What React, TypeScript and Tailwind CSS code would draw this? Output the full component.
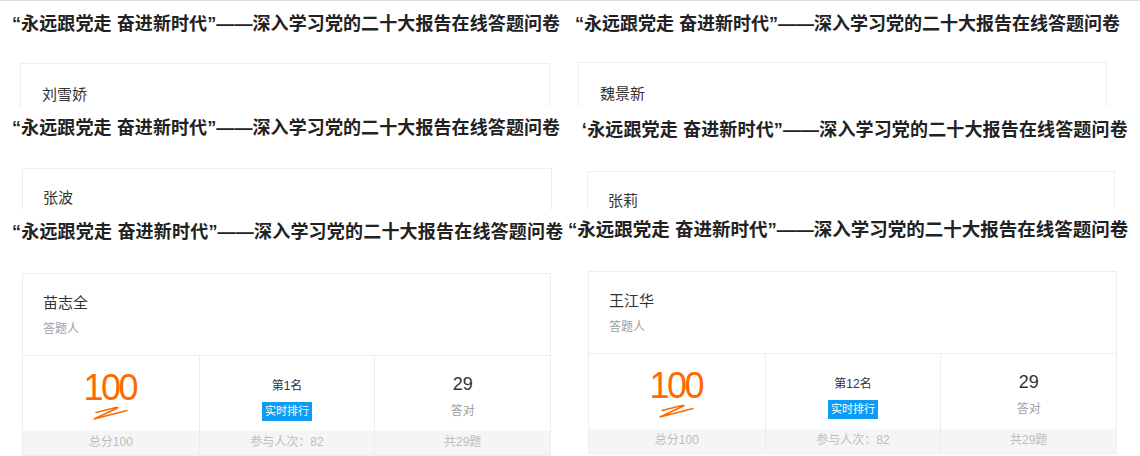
import React from "react";

const TITLE = "“永远跟党走 奋进新时代”——深入学习党的二十大报告在线答题问卷";
const FONT = { fontFamily: '"Liberation Sans", "Noto Sans CJK SC", sans-serif' };

function Title({ className = "" }: { className?: string }) {
  return (
    <div className={"h-[24px] leading-[24px] font-bold text-[#222] whitespace-nowrap " + className}>
      {TITLE}
    </div>
  );
}

function Squiggle() {
  return (
    <svg width="40" height="14" viewBox="0 0 40 14" className="block">
      <path d="M5 6.5 L25 1.5 L27 1.8 L4 12.5 L3 13 L36 4.5" fill="none" stroke="#ff6a00" strokeWidth="1.5" strokeLinecap="round" strokeLinejoin="round" />
    </svg>
  );
}

function FullCard({ name, rank }: { name: string; rank: string }) {
  return (
    <div className="w-[529px] border border-[#eeeeee] bg-white">
      <div className="pt-[18px] pb-[17px] pl-[20px]">
        <div className="text-[15px] leading-[22px] text-[#333]">{name}</div>
        <div className="mt-[6px] text-[12px] leading-[18px] text-[#a0a0a0]">答题人</div>
      </div>
      <div className="grid grid-cols-3 h-[76px] border-t border-[#eeeeee]">
        <div className="flex flex-col items-center pt-[14px]">
          <div className="text-[36px] leading-[36px] tracking-[-2.5px] text-[#ff6a00] pr-[2px]">100</div>
          <Squiggle />
        </div>
        <div className="flex flex-col items-center pt-[22px] border-l border-[#eeeeee]">
          <div className="text-[12px] leading-[16px] text-[#333]">{rank}</div>
          <div className="mt-[8px] h-[19px] px-[3px] leading-[19px] text-[11px] text-white bg-[#0d9bf5]">实时排行</div>
        </div>
        <div className="flex flex-col items-center pt-[17px] border-l border-[#eeeeee]">
          <div className="text-[18px] leading-[22px] text-[#333]">29</div>
          <div className="mt-[8px] text-[12px] leading-[16px] text-[#a0a0a0]">答对</div>
        </div>
      </div>
      <div className="grid grid-cols-3 h-[24px] bg-[#f5f5f5] text-[12px] leading-[22px] text-[#bdbdbd] text-center">
        <div>总分100</div>
        <div className="border-l border-[#ececec]">参与人次：82</div>
        <div className="border-l border-[#ececec]">共29题</div>
      </div>
    </div>
  );
}

export default function App() {
  return (
    <div className="w-[1140px] h-[456px] overflow-hidden bg-white flex" style={FONT}>
      {/* Left column */}
      <div className="w-[566px] flex flex-col">
        <div className="h-[107px] overflow-hidden border-t border-[#dcdcdc] pt-[11px] pl-[12px]">
          <Title className="text-[18px] tracking-[0.1px]" />
          <div className="mt-[27px] ml-[8px] w-[530px] border border-[#eeeeee] pt-[21px] pl-[21px] h-[80px]">
            <div className="text-[15px] leading-[20px] text-[#333]">刘雪娇</div>
          </div>
        </div>
        <div className="h-[103px] overflow-hidden pt-[9px] pl-[12px]">
          <Title className="text-[18px] tracking-[0.1px]" />
          <div className="mt-[28px] ml-[10px] w-[530px] border border-[#eeeeee] pt-[19px] pl-[20px] h-[80px]">
            <div className="text-[15px] leading-[20px] text-[#333]">张波</div>
          </div>
        </div>
        <div className="h-[246px] overflow-hidden pt-[10px] pl-[12px]">
          <Title className="text-[18px] tracking-[0.2px]" />
          <div className="mt-[29px] ml-[10px]">
            <FullCard name="苗志全" rank="第1名" />
          </div>
        </div>
      </div>
      {/* Right column */}
      <div className="flex-1 flex flex-col">
        <div className="h-[107px] overflow-hidden border-t border-[#dcdcdc] pt-[11px] pl-[9px]">
          <Title className="text-[18px]" />
          <div className="mt-[26px] ml-[3px] w-[529px] border border-[#eeeeee] pt-[21px] pl-[21px] h-[80px]">
            <div className="text-[15px] leading-[20px] text-[#333]">魏景新</div>
          </div>
        </div>
        <div className="h-[103px] overflow-hidden pt-[11px] pl-[16px]">
          <div className="overflow-hidden">
            <Title className="text-[18px] tracking-[0.15px] ml-[-4px]" />
          </div>
          <div className="mt-[29px] ml-[5px] w-[528px] border border-[#eeeeee] pt-[19px] pl-[20px] h-[80px]">
            <div className="text-[15px] leading-[20px] text-[#333]">张莉</div>
          </div>
        </div>
        <div className="h-[246px] overflow-hidden pt-[8px] pl-[2px]">
          <Title className="text-[18.5px]" />
          <div className="mt-[29px] ml-[20px]">
            <FullCard name="王江华" rank="第12名" />
          </div>
        </div>
      </div>
    </div>
  );
}
